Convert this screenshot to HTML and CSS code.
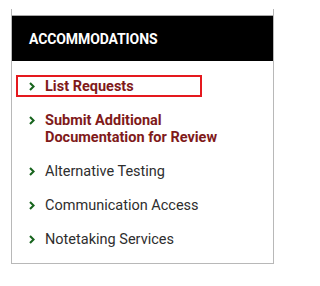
FILE: index.html
```html
<!DOCTYPE html>
<html lang="en">
<head>
<meta charset="utf-8">
<title>Accommodations</title>
<link rel="stylesheet" href="styles.css">
</head>
<body>
<nav class="panel">
  <h2 class="panel-title">ACCOMMODATIONS</h2>
  <ul class="menu">
    <li class="item active">
      <svg class="chev" viewBox="0 0 6 9" width="6" height="9"><polyline points="1,1 4.6,4.5 1,8" fill="none" stroke="currentColor" stroke-width="2.1"/></svg>
      <span class="label strong">List Requests</span>
    </li>
    <li class="item">
      <svg class="chev" viewBox="0 0 6 9" width="6" height="9"><polyline points="1,1 4.6,4.5 1,8" fill="none" stroke="currentColor" stroke-width="2.1"/></svg>
      <span class="label strong">Submit Additional Documentation for Review</span>
    </li>
    <li class="item">
      <svg class="chev" viewBox="0 0 6 9" width="6" height="9"><polyline points="1,1 4.6,4.5 1,8" fill="none" stroke="currentColor" stroke-width="2.1"/></svg>
      <span class="label">Alternative Testing</span>
    </li>
    <li class="item">
      <svg class="chev" viewBox="0 0 6 9" width="6" height="9"><polyline points="1,1 4.6,4.5 1,8" fill="none" stroke="currentColor" stroke-width="2.1"/></svg>
      <span class="label">Communication Access</span>
    </li>
    <li class="item">
      <svg class="chev" viewBox="0 0 6 9" width="6" height="9"><polyline points="1,1 4.6,4.5 1,8" fill="none" stroke="currentColor" stroke-width="2.1"/></svg>
      <span class="label">Notetaking Services</span>
    </li>
  </ul>
</nav>
</body>
</html>
```

FILE: styles.css
```css
html, body {
  margin: 0;
  padding: 0;
  background: #ffffff;
}

body {
  font-family: Roboto, "Liberation Sans", Arial, sans-serif;
}

.panel {
  box-sizing: border-box;
  width: 263px;
  height: 255px;
  margin: 9px 0 0 11px;
  padding-top: 6px;
  border: 1px solid #b8b8b8;
  border-top: none;
}

.panel-title {
  box-sizing: border-box;
  height: 46px;
  margin: 0;
  padding-left: 17px;
  display: flex;
  align-items: center;
  background: #000000;
  border-top: 1px solid #a8a8a8;
  color: #ffffff;
  font-size: 14px;
  font-weight: 700;
  letter-spacing: -0.1px;
}

.menu {
  list-style: none;
  margin: 0;
  padding: 14px 0 0 4px;
  display: flex;
  flex-direction: column;
  gap: 12px;
}

.item {
  box-sizing: border-box;
  display: flex;
  align-items: flex-start;
  padding: 1px 0 0 11px;
  border: 2px solid transparent;
  font-size: 14.5px;
  line-height: 17px;
  color: #2e2e2e;
}

.item.active {
  width: 186px;
  border-color: #e5191e;
}

.chev {
  flex: none;
  margin-top: 4px;
  margin-right: 10px;
  color: #17641d;
}

.label {
  max-width: 190px;
}

.label.strong {
  font-weight: 700;
  color: #7f1a1a;
}
```
